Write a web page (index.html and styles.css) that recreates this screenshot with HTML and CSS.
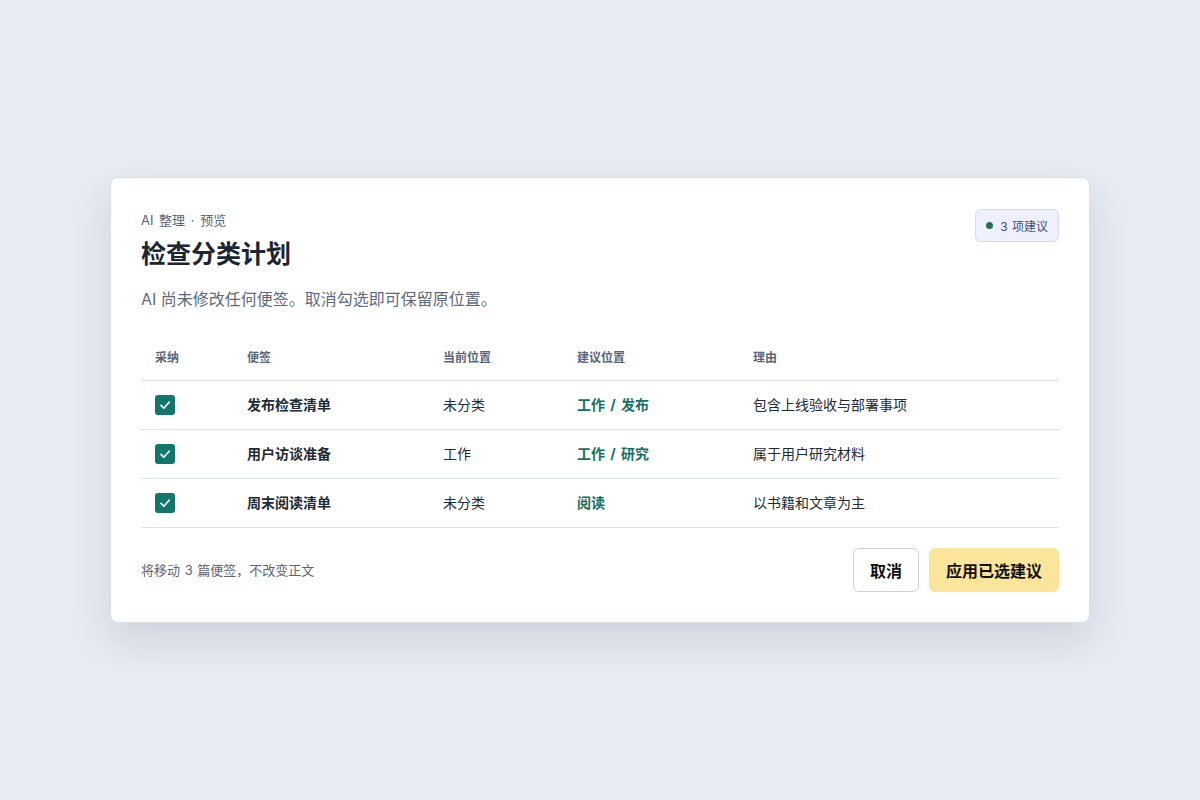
FILE: index.html
```html
<!DOCTYPE html>
<html lang="zh-CN">
<head>
<meta charset="utf-8">
<link rel="stylesheet" href="styles.css">
</head>
<body>
<div class="stage">
  <div class="card">
    <div class="head">
      <div class="head-text">
        <div class="eyebrow">AI 整理 · 预览</div>
        <h1 class="title">检查分类计划</h1>
      </div>
      <div class="badge"><span class="dot"></span>3 项建议</div>
    </div>
    <p class="sub">AI 尚未修改任何便签。取消勾选即可保留原位置。</p>
    <table class="plan">
      <thead>
        <tr>
          <th class="c1">采纳</th>
          <th class="c2">便签</th>
          <th class="c3">当前位置</th>
          <th class="c4">建议位置</th>
          <th class="c5">理由</th>
        </tr>
      </thead>
      <tbody>
        <tr>
          <td><span class="check"><svg viewBox="0 0 20 20" width="20" height="20"><path d="M6 10.3l2.8 2.9 5.4-6" fill="none" stroke="#fff" stroke-width="1.7" stroke-linecap="round" stroke-linejoin="round"/></svg></span></td>
          <td class="name">发布检查清单</td>
          <td>未分类</td>
          <td class="dest">工作 / 发布</td>
          <td>包含上线验收与部署事项</td>
        </tr>
        <tr>
          <td><span class="check"><svg viewBox="0 0 20 20" width="20" height="20"><path d="M6 10.3l2.8 2.9 5.4-6" fill="none" stroke="#fff" stroke-width="1.7" stroke-linecap="round" stroke-linejoin="round"/></svg></span></td>
          <td class="name">用户访谈准备</td>
          <td>工作</td>
          <td class="dest">工作 / 研究</td>
          <td>属于用户研究材料</td>
        </tr>
        <tr>
          <td><span class="check"><svg viewBox="0 0 20 20" width="20" height="20"><path d="M6 10.3l2.8 2.9 5.4-6" fill="none" stroke="#fff" stroke-width="1.7" stroke-linecap="round" stroke-linejoin="round"/></svg></span></td>
          <td class="name">周末阅读清单</td>
          <td>未分类</td>
          <td class="dest">阅读</td>
          <td>以书籍和文章为主</td>
        </tr>
      </tbody>
    </table>
    <div class="foot">
      <div class="note">将移动 3 篇便签，不改变正文</div>
      <div class="actions">
        <button class="btn ghost">取消</button>
        <button class="btn primary">应用已选建议</button>
      </div>
    </div>
  </div>
</div>
</body>
</html>
```

FILE: styles.css
```css
* { box-sizing: border-box; }
html, body { margin: 0; padding: 0; }
body {
  background: #e7ebf3;
  font-family: Inter, "Noto Sans CJK SC", "Noto Sans", sans-serif;
  color: #1f2733;
  width: 1200px;
  height: 800px;
}
.stage {
  height: 800px;
  display: flex;
  align-items: center;
  justify-content: center;
}
.card {
  width: 980px;
  height: 446px;
  background: #fff;
  border: 1px solid #d9dee8;
  border-radius: 8px;
  box-shadow: 0 18px 40px rgba(30, 42, 70, 0.12);
  padding: 31px 30px 29px 30px;
}
.head {
  display: flex;
  justify-content: space-between;
  align-items: flex-start;
}
.eyebrow {
  font-size: 13px;
  line-height: 18px;
  color: #5a6579;
  margin-top: 2px;
  word-spacing: 2px;
}
.title {
  margin: 9px 0 0;
  font-size: 25px;
  line-height: 32px;
  font-weight: 700;
  color: #1d2533;
}
.badge {
  display: flex;
  align-items: center;
  height: 33px;
  padding: 0 10px;
  border: 1px solid #d3dbef;
  background: #eef1fd;
  border-radius: 6px;
  font-size: 12px;
  color: #3e4a86;
  word-spacing: 1px;
}
.dot {
  width: 7px;
  height: 7px;
  border-radius: 50%;
  background: #23704f;
  margin-right: 7px;
}
.sub {
  margin: 17px 0 0;
  font-size: 16px;
  line-height: 24px;
  color: #5d6a80;
}
.plan {
  margin-top: 22px;
  width: 918px;
  border-collapse: collapse;
  table-layout: fixed;
  font-size: 14px;
}
.plan th {
  text-align: left;
  font-size: 12px;
  font-weight: 700;
  color: #5a6579;
  height: 47px;
  padding: 0 14px;
  border-bottom: 1px solid #dde3ec;
}
.plan td {
  height: 49px;
  padding: 0 14px 1px;
  border-bottom: 1px solid #dde3ec;
  color: #222a36;
}
.c1 { width: 92px; }
.c2 { width: 196px; }
.c3 { width: 134px; }
.c4 { width: 176px; }
.c5 { width: 320px; }
.name { font-weight: 700; }
.dest { font-weight: 700; color: #166f63 !important; word-spacing: 2px; }
.check {
  display: block;
  width: 20px;
  height: 20px;
  border-radius: 3px;
  background: #12766a;
  margin-top: 1px;
}
.check svg { display: block; }
.foot {
  margin-top: 20px;
  display: flex;
  justify-content: space-between;
  align-items: center;
}
.note {
  font-size: 13px;
  color: #5a6579;
  word-spacing: 1px;
}
.actions {
  display: flex;
  gap: 10px;
}
.btn {
  height: 44px;
  border-radius: 6px;
  font-family: Inter, "Noto Sans CJK SC", sans-serif;
  font-size: 16px;
  font-weight: 700;
  color: #111;
  padding: 0 16px;
  cursor: pointer;
}
.ghost {
  width: 66px;
  background: #fff;
  border: 1px solid #cbd2dd;
}
.primary {
  width: 130px;
  background: #fbe59b;
  border: 1px solid #fbe59b;
}
```
